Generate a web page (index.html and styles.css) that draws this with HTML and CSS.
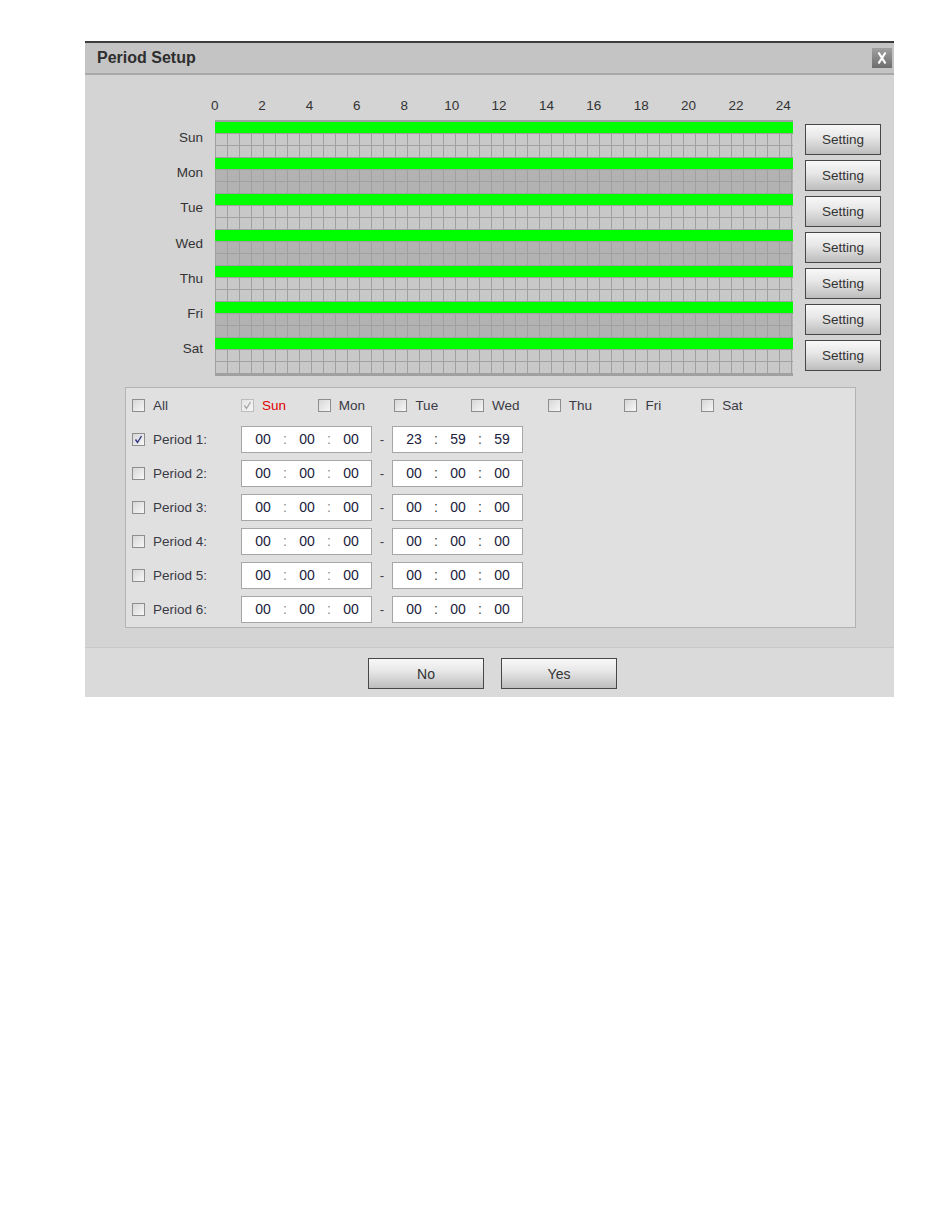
FILE: index.html
```html
<!DOCTYPE html>
<html>
<head>
<meta charset="utf-8">
<title>Period Setup</title>
<link rel="stylesheet" href="styles.css">
</head>
<body>
<div class="dialog">
  <div class="titlebar">
    <span class="title">Period Setup</span>
    <span class="close"><svg width="20" height="20" viewBox="0 0 20 20"><path d="M6.5 4.5 L13.5 15.5 M13.5 4.5 L6.5 15.5" stroke="#fff" stroke-width="2.2" fill="none"/></svg></span>
  </div>
  <div class="content">
    <div class="hours">
      <span>0</span><span>2</span><span>4</span><span>6</span><span>8</span><span>10</span><span>12</span><span>14</span><span>16</span><span>18</span><span>20</span><span>22</span><span>24</span>
    </div>
    <div class="schedule">
      <div class="daylabels">
        <div>Sun</div><div>Mon</div><div>Tue</div><div>Wed</div><div>Thu</div><div>Fri</div><div>Sat</div>
      </div>
      <div class="grid">
        <div class="day light"><div class="bar"></div><div class="cells"></div><div class="cells"></div></div>
        <div class="day dark"><div class="bar"></div><div class="cells"></div><div class="cells"></div></div>
        <div class="day light"><div class="bar"></div><div class="cells"></div><div class="cells"></div></div>
        <div class="day dark"><div class="bar"></div><div class="cells"></div><div class="cells"></div></div>
        <div class="day light"><div class="bar"></div><div class="cells"></div><div class="cells"></div></div>
        <div class="day dark"><div class="bar"></div><div class="cells"></div><div class="cells"></div></div>
        <div class="day light last"><div class="bar"></div><div class="cells"></div><div class="cells"></div></div>
      </div>
      <div class="settings">
        <button class="btn setting">Setting</button>
        <button class="btn setting">Setting</button>
        <button class="btn setting">Setting</button>
        <button class="btn setting">Setting</button>
        <button class="btn setting">Setting</button>
        <button class="btn setting">Setting</button>
        <button class="btn setting">Setting</button>
      </div>
    </div>
    <div class="periods">
      <div class="row days">
        <div class="item"><span class="cb"></span><span>All</span></div>
        <div class="item"><span class="cb disabled"><svg width="11" height="11" viewBox="0 0 11 11"><path d="M2.5 5.5 L4.5 8.5 L8.5 2" stroke="#a8a8a8" stroke-width="1.4" fill="none"/></svg></span><span class="red">Sun</span></div>
        <div class="item"><span class="cb"></span><span>Mon</span></div>
        <div class="item"><span class="cb"></span><span>Tue</span></div>
        <div class="item"><span class="cb"></span><span>Wed</span></div>
        <div class="item"><span class="cb"></span><span>Thu</span></div>
        <div class="item"><span class="cb"></span><span>Fri</span></div>
        <div class="item"><span class="cb"></span><span>Sat</span></div>
      </div>
      <div class="row period">
        <div class="item lbl"><span class="cb"><svg width="11" height="11" viewBox="0 0 11 11"><path d="M2.5 5.5 L4.5 8.5 L8.5 2" stroke="#2b3580" stroke-width="1.4" fill="none"/></svg></span><span>Period 1:</span></div>
        <div class="timebox"><span class="f">00</span><span class="c">:</span><span class="f">00</span><span class="c">:</span><span class="f">00</span></div>
        <span class="dash">-</span>
        <div class="timebox"><span class="f">23</span><span class="c dk">:</span><span class="f">59</span><span class="c dk">:</span><span class="f">59</span></div>
      </div>
      <div class="row period">
        <div class="item lbl"><span class="cb"></span><span>Period 2:</span></div>
        <div class="timebox"><span class="f">00</span><span class="c">:</span><span class="f">00</span><span class="c">:</span><span class="f">00</span></div>
        <span class="dash">-</span>
        <div class="timebox"><span class="f">00</span><span class="c dk">:</span><span class="f">00</span><span class="c dk">:</span><span class="f">00</span></div>
      </div>
      <div class="row period">
        <div class="item lbl"><span class="cb"></span><span>Period 3:</span></div>
        <div class="timebox"><span class="f">00</span><span class="c">:</span><span class="f">00</span><span class="c">:</span><span class="f">00</span></div>
        <span class="dash">-</span>
        <div class="timebox"><span class="f">00</span><span class="c dk">:</span><span class="f">00</span><span class="c dk">:</span><span class="f">00</span></div>
      </div>
      <div class="row period">
        <div class="item lbl"><span class="cb"></span><span>Period 4:</span></div>
        <div class="timebox"><span class="f">00</span><span class="c">:</span><span class="f">00</span><span class="c">:</span><span class="f">00</span></div>
        <span class="dash">-</span>
        <div class="timebox"><span class="f">00</span><span class="c dk">:</span><span class="f">00</span><span class="c dk">:</span><span class="f">00</span></div>
      </div>
      <div class="row period">
        <div class="item lbl"><span class="cb"></span><span>Period 5:</span></div>
        <div class="timebox"><span class="f">00</span><span class="c">:</span><span class="f">00</span><span class="c">:</span><span class="f">00</span></div>
        <span class="dash">-</span>
        <div class="timebox"><span class="f">00</span><span class="c dk">:</span><span class="f">00</span><span class="c dk">:</span><span class="f">00</span></div>
      </div>
      <div class="row period">
        <div class="item lbl"><span class="cb"></span><span>Period 6:</span></div>
        <div class="timebox"><span class="f">00</span><span class="c">:</span><span class="f">00</span><span class="c">:</span><span class="f">00</span></div>
        <span class="dash">-</span>
        <div class="timebox"><span class="f">00</span><span class="c dk">:</span><span class="f">00</span><span class="c dk">:</span><span class="f">00</span></div>
      </div>
    </div>
  </div>
  <div class="footer">
    <button class="btn big">No</button>
    <button class="btn big">Yes</button>
  </div>
</div>
</body>
</html>
```

FILE: styles.css
```css
* { box-sizing: border-box; }

body {
  margin: 0;
  background: #ffffff;
  font-family: "Liberation Sans", Arial, sans-serif;
  font-size: 13.5px;
  color: #333333;
}

.dialog {
  width: 809px;
  margin: 41px 0 0 85px;
  background: #d4d4d4;
}

.titlebar {
  height: 34px;
  border-top: 2px solid #3c3c3c;
  border-bottom: 2px solid #a9a9a9;
  background: #c4c4c4;
  display: flex;
  align-items: center;
  justify-content: space-between;
  padding: 0 2px 0 12px;
}

.title {
  font-weight: bold;
  font-size: 16px;
  color: #2e2e2e;
}

.close {
  width: 20px;
  height: 20px;
  display: flex;
  background: linear-gradient(#a0a0a0, #6e6e6e);
}

.content {
  padding: 23px 0 19px 0;
}

.hours {
  display: flex;
  margin-left: 106px;
  height: 16px;
  line-height: 16px;
  margin-bottom: 6px;
}

.hours span {
  flex: none;
  width: 47.4px;
  text-align: center;
}

.schedule {
  display: flex;
  align-items: flex-start;
}

.daylabels {
  width: 118px;
  flex: none;
}

.daylabels div {
  height: 35.17px;
  display: flex;
  align-items: center;
  justify-content: flex-end;
}

.grid {
  flex: none;
  margin-left: 12px;
  width: 578px;
  border-top: 2px solid #a0a0a0;
  border-bottom: 2px solid #a0a0a0;
}

.bar {
  height: 12px;
  background: #00ff00;
  border-bottom: 1px solid #a0a0a0;
}

.cells {
  height: 12px;
  border-bottom: 1px solid #a0a0a0;
}

.light .cells {
  background: repeating-linear-gradient(to right, #a0a0a0 0, #a0a0a0 1px, #c8c8c8 1px, #c8c8c8 12px);
}

.dark .cells {
  background: repeating-linear-gradient(to right, #a0a0a0 0, #a0a0a0 1px, #b2b2b2 1px, #b2b2b2 12px);
}

.settings {
  flex: none;
  margin: 4px 0 0 12px;
  display: flex;
  flex-direction: column;
  gap: 5px;
}

.btn {
  font-family: inherit;
  font-size: 13.5px;
  color: #333333;
  padding: 0;
  border: 1px solid #474747;
  background: linear-gradient(#f8f8f8 0%, #e8e8e8 40%, #bdbdbd 100%);
}

.setting {
  width: 76px;
  height: 31px;
}

.big {
  width: 116px;
  height: 31px;
  font-size: 14px;
}

.periods {
  margin: 11px 0 0 40px;
  width: 731px;
  border: 1px solid #b3b3b3;
  background: #e0e0e0;
  padding: 0 0 1px 6px;
}

.row {
  height: 34px;
  display: flex;
  align-items: center;
}

.days {
  display: grid;
  grid-template-columns: 109px repeat(7, 76.7px);
  align-items: center;
}

.item {
  display: flex;
  align-items: center;
  gap: 8px;
  color: #3a3a44;
}

.lbl {
  width: 109px;
  flex: none;
}

.cb {
  width: 13px;
  height: 13px;
  flex: none;
  border: 1px solid #8e8e8e;
  background: linear-gradient(135deg, #d6d6d6, #f7f7f7);
  display: flex;
}

.cb.disabled {
  border-color: #bdbdbd;
  background: linear-gradient(135deg, #e4e4e4, #f6f6f6);
}

.red {
  color: #e00000;
}

.timebox {
  width: 131px;
  height: 27px;
  flex: none;
  border: 1px solid #a6a6a6;
  background: #ffffff;
  display: flex;
  align-items: center;
  padding-left: 6px;
  color: #20203c;
  font-size: 14px;
}

.f {
  width: 30px;
  text-align: center;
}

.c {
  width: 14px;
  text-align: center;
  color: #8a8a8a;
}

.c.dk {
  color: #444444;
}

.dash {
  width: 20px;
  text-align: center;
  color: #444444;
}

.footer {
  border-top: 1px solid #c8c8c8;
  background: #dadada;
  padding: 10px 0 8px 6px;
  display: flex;
  justify-content: center;
  gap: 17px;
}
```
